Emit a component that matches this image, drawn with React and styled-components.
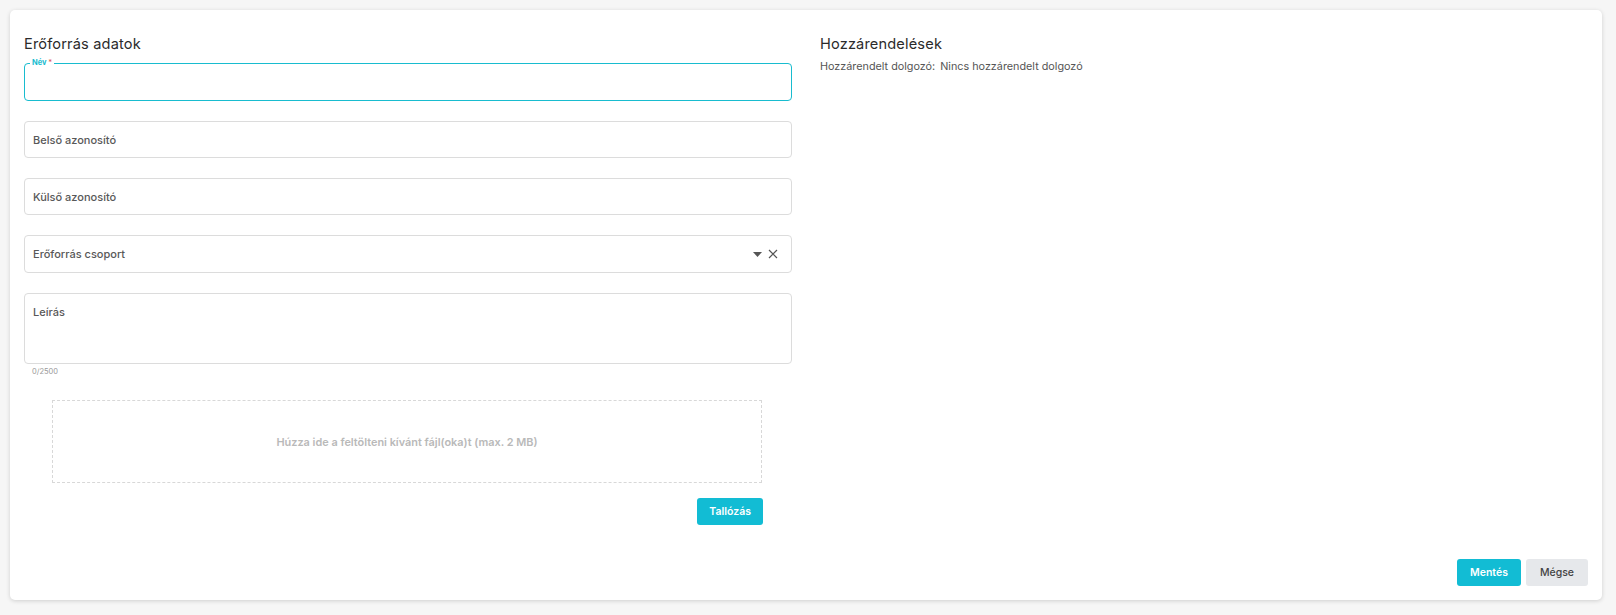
import React from "react";
import styled, { createGlobalStyle } from "styled-components";

const Global = createGlobalStyle`
  html, body { margin: 0; padding: 0; background: #f6f6f6; }
  body { font-family: Inter, "Noto Sans", sans-serif; color: #333; }
  * { box-sizing: border-box; }
`;

const Page = styled.div`
  height: 615px;
  padding: 10px 14px 15px 10px;
  display: flex;
`;

const Card = styled.div`
  flex: 1;
  background: #fff;
  border-radius: 5px;
  box-shadow: 0 1px 4px rgba(0, 0, 0, 0.16);
  padding: 24px 14px 14px 14px;
  display: flex;
  flex-direction: column;
`;

const Columns = styled.div`
  display: grid;
  grid-template-columns: 1fr 1fr;
  column-gap: 28px;
`;

const Column = styled.div`
  display: flex;
  flex-direction: column;
`;

const Heading = styled.h2`
  margin: 0;
  font-size: 14.6px;
  font-weight: 400;
  color: #2b2b2b;
  line-height: 20px;
  letter-spacing: 0.15px;
`;

const Fields = styled.div`
  display: flex;
  flex-direction: column;
  gap: 20px;
  margin-top: 9px;
`;

const Field = styled.div`
  position: relative;
  height: ${(p) => p.$h || 37}px;
  border: 1px solid ${(p) => (p.$focused ? "#18bccf" : "#dcdcdc")};
  border-width: ${(p) => (p.$focused ? "1.5px" : "1px")};
  border-radius: 4px;
  display: flex;
  align-items: ${(p) => (p.$multi ? "flex-start" : "center")};
  padding: ${(p) => (p.$multi ? "11px 8px" : "0 8px")};
`;

const Placeholder = styled.span`
  flex: 1;
  font-size: 11px;
  font-weight: 500;
  color: #585858;
`;

const FloatLabel = styled.span`
  position: absolute;
  top: -6px;
  left: 5px;
  padding: 0 2px;
  background: #fff;
  font-size: 7.5px;
  font-weight: 700;
  color: #18bccf;
  line-height: 10px;
`;

const Star = styled.span`
  color: #e05a5a;
  font-weight: 500;
`;

const Adornments = styled.div`
  display: flex;
  align-items: center;
  gap: 6px;
  color: #555;
  margin-right: 5px;
`;

const Counter = styled.div`
  font-size: 7.5px;
  color: #999;
  margin: 3px 0 0 8px;
`;

const DropZone = styled.div`
  margin: 24px 30px 0 28px;
  height: 83px;
  border: 1px dashed #d8d8d8;
  display: flex;
  align-items: center;
  justify-content: center;
  font-size: 10.9px;
  font-weight: 600;
  color: #b9b9b9;
`;

const BrowseRow = styled.div`
  display: flex;
  justify-content: flex-end;
  margin: 15px 29px 0 0;
`;

const Button = styled.button`
  height: 27px;
  padding: 0 ${(p) => p.$px || 12}px;
  border: none;
  border-radius: 3px;
  font-family: inherit;
  font-size: 10.5px;
  font-weight: ${(p) => (p.$secondary ? 500 : 600)};
  background: ${(p) => (p.$secondary ? "#e6e8eb" : "#12bcd4")};
  color: ${(p) => (p.$secondary ? "#444" : "#fff")};
  cursor: pointer;
`;

const InfoLine = styled.div`
  margin-top: 6px;
  font-size: 10.8px;
  color: #555;
  display: flex;
  gap: 5px;
`;

const Footer = styled.div`
  margin-top: auto;
  display: flex;
  justify-content: flex-end;
  gap: 5px;
`;

const Caret = () => (
  <svg width="9" height="5" viewBox="0 0 9 5">
    <path d="M0 0h9L4.5 5z" fill="#555" />
  </svg>
);

const Cross = () => (
  <svg width="10" height="10" viewBox="0 0 10 10">
    <path d="M1 1l8 8M9 1L1 9" stroke="#555" strokeWidth="1.2" />
  </svg>
);

export default function App() {
  return (
    <>
      <Global />
      <Page>
        <Card>
          <Columns>
            <Column>
              <Heading>Erőforrás adatok</Heading>
              <Fields>
                <Field $focused $h={38}>
                  <FloatLabel>
                    Név <Star>*</Star>
                  </FloatLabel>
                </Field>
                <Field>
                  <Placeholder>Belső azonosító</Placeholder>
                </Field>
                <Field>
                  <Placeholder>Külső azonosító</Placeholder>
                </Field>
                <Field $h={38}>
                  <Placeholder>Erőforrás csoport</Placeholder>
                  <Adornments>
                    <Caret />
                    <Cross />
                  </Adornments>
                </Field>
                <div>
                  <Field $h={71} $multi>
                    <Placeholder>Leírás</Placeholder>
                  </Field>
                  <Counter>0/2500</Counter>
                </div>
              </Fields>
              <DropZone>Húzza ide a feltölteni kívánt fájl(oka)t (max. 2 MB)</DropZone>
              <BrowseRow>
                <Button>Tallózás</Button>
              </BrowseRow>
            </Column>
            <Column>
              <Heading>Hozzárendelések</Heading>
              <InfoLine>
                <span>Hozzárendelt dolgozó:</span>
                <span>Nincs hozzárendelt dolgozó</span>
              </InfoLine>
            </Column>
          </Columns>
          <Footer>
            <Button $px={13}>Mentés</Button>
            <Button $secondary $px={14}>Mégse</Button>
          </Footer>
        </Card>
      </Page>
    </>
  );
}
